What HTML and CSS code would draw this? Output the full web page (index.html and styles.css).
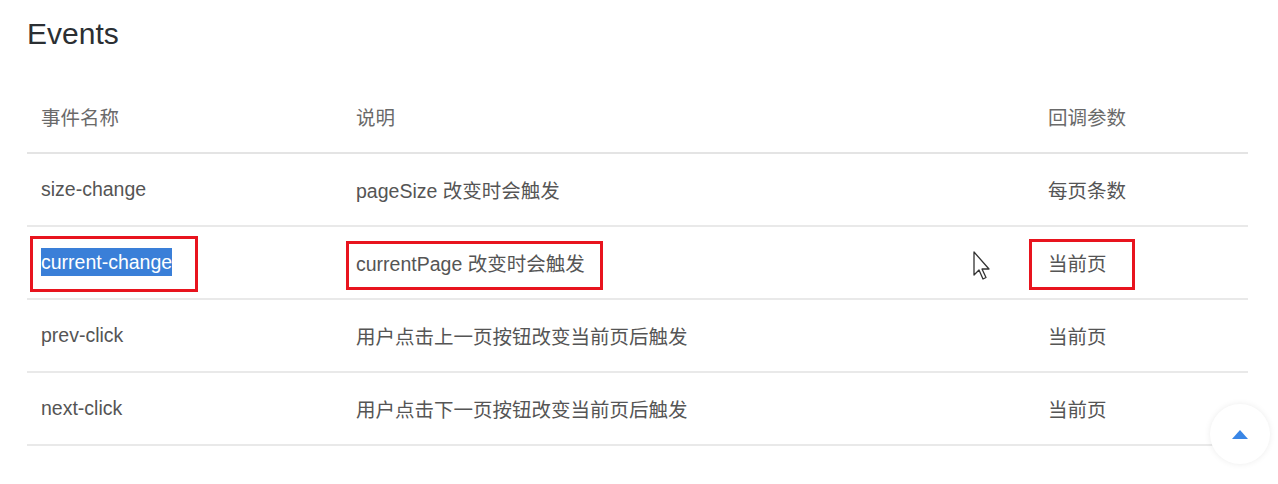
FILE: index.html
```html
<!DOCTYPE html>
<html lang="zh">
<head>
<meta charset="utf-8">
<title>Events</title>
<link rel="stylesheet" href="styles.css">
</head>
<body>
<div class="page">
  <h2 class="title">Events</h2>
  <table class="events">
    <colgroup>
      <col class="c1"><col class="c2"><col class="c3">
    </colgroup>
    <thead>
      <tr><th>事件名称</th><th>说明</th><th>回调参数</th></tr>
    </thead>
    <tbody>
      <tr><td>size-change</td><td>pageSize 改变时会触发</td><td>每页条数</td></tr>
      <tr><td><span class="mark m1"><span class="sel">current-change</span></span></td><td><span class="mark m2">currentPage 改变时会触发</span></td><td class="cursor-cell"><svg class="cursor" width="20" height="30" viewBox="0 0 20 30"><path d="M2 1 L2 24 L7 19 L11 28 L14 26.5 L10 18 L17 18 Z" fill="#fff" stroke="#333" stroke-width="1.3" stroke-linejoin="round"/></svg><span class="mark m3">当前页</span></td></tr>
      <tr><td>prev-click</td><td>用户点击上一页按钮改变当前页后触发</td><td>当前页</td></tr>
      <tr><td>next-click</td><td>用户点击下一页按钮改变当前页后触发</td><td>当前页</td></tr>
    </tbody>
  </table>
</div>
<div class="backtop"><span class="tri"></span></div>
</body>
</html>
```
FILE: styles.css
```css
html, body {
  margin: 0;
  padding: 0;
  background: #fff;
}
body {
  font-family: "Liberation Sans", Arial, "Noto Sans CJK SC", sans-serif;
  color: #5a5a5a;
  width: 1278px;
  height: 484px;
  overflow: hidden;
  position: relative;
}
.page {
  padding: 14px 30px 0 27px;
}
.title {
  margin: 0;
  font-size: 30px;
  line-height: 40px;
  font-weight: normal;
  color: #2b2f33;
}
.events {
  margin-top: 27px;
  width: 1221px;
  border-collapse: collapse;
  table-layout: fixed;
  font-size: 19.5px;
}
.c1 { width: 315px; }
.c2 { width: 692px; }
.c3 { width: 214px; }
.events th,
.events td {
  height: 71px;
  padding: 0 0 0 14px;
  text-align: left;
  vertical-align: middle;
  border-bottom: 2px solid #e9e9e9;
  white-space: nowrap;
}
.events th {
  font-weight: normal;
  color: #6a6a6a;
  border-bottom-color: #e4e4e4;
}
.events td {
  color: #555;
}
.mark {
  position: relative;
}
.mark::after {
  content: "";
  position: absolute;
  border: 3px solid #e8141e;
  pointer-events: none;
}
.m1::after { left: -11px; right: -26px; top: -15px; bottom: -19px; }
.m2::after { left: -10px; right: -18px; top: -12px; bottom: -15px; }
.m3::after { left: -19px; right: -28px; top: -14px; bottom: -15px; }
.sel {
  background: #3a7fd8;
  color: #fff;
  padding: 3px 0;
}
.cursor-cell {
  position: relative;
}
.cursor {
  position: absolute;
  left: -62px;
  top: 24px;
}
.backtop {
  position: absolute;
  left: 1210px;
  top: 404px;
  width: 60px;
  height: 60px;
  border-radius: 50%;
  background: #fff;
  box-shadow: 0 0 6px rgba(0, 0, 0, 0.08);
  display: flex;
  align-items: center;
  justify-content: center;
}
.tri {
  width: 0;
  height: 0;
  border-left: 8px solid transparent;
  border-right: 8px solid transparent;
  border-bottom: 9px solid #3a86e6;
}
```
